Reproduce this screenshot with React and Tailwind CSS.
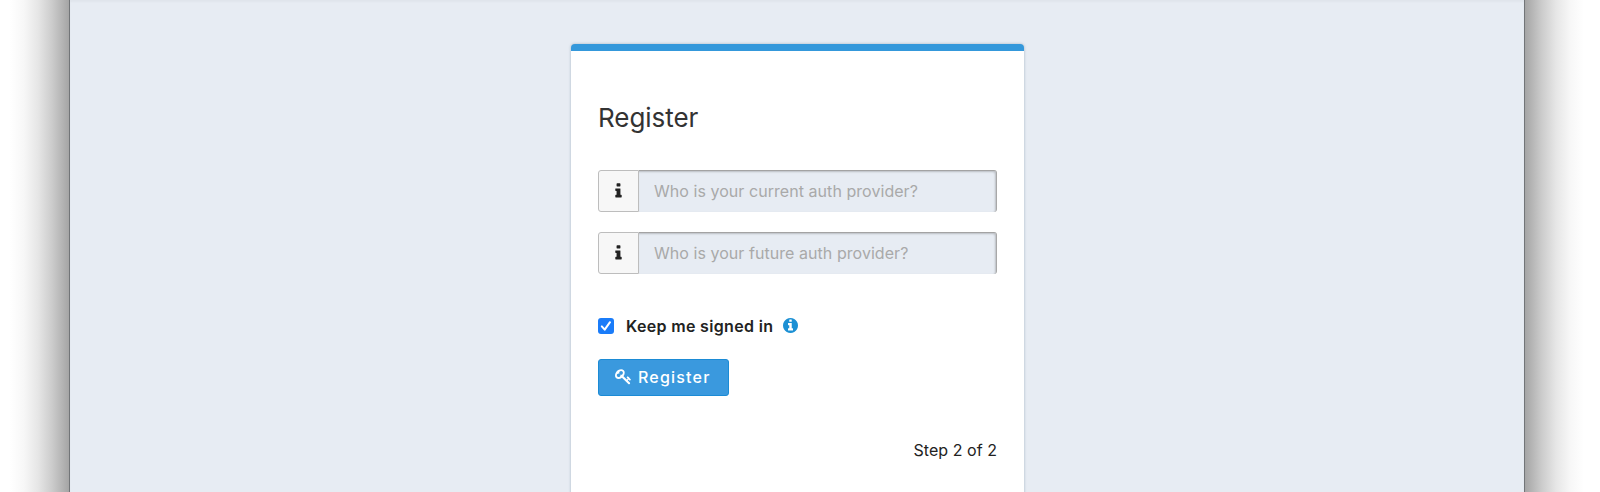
function InfoIcon({ className }) {
  return (
    <svg viewBox="0 0 640 1792" fill="currentColor" className={className}>
      <path d="M640 1344v128q0 26-19 45t-45 19h-512q-26 0-45-19t-19-45v-128q0-26 19-45t45-19h64v-384h-64q-26 0-45-19t-19-45v-128q0-26 19-45t45-19h384q26 0 45 19t19 45v576h64q26 0 45 19t19 45zm-128-1152v192q0 26-19 45t-45 19h-256q-26 0-45-19t-19-45v-192q0-26 19-45t45-19h256q26 0 45 19t19 45z" />
    </svg>
  );
}

function InfoCircleIcon({ className }) {
  return (
    <svg viewBox="0 128 1536 1536" fill="currentColor" className={className}>
      <path d="M1024 1376v-160q0-14-9-23t-23-9h-96v-512q0-14-9-23t-23-9h-320q-14 0-23 9t-9 23v160q0 14 9 23t23 9h96v320h-96q-14 0-23 9t-9 23v160q0 14 9 23t23 9h448q14 0 23-9t9-23zm-128-896v-160q0-14-9-23t-23-9h-192q-14 0-23 9t-9 23v160q0 14 9 23t23 9h192q14 0 23-9t9-23zm640 416q0 209-103 385.5t-279.5 279.5-385.5 103-385.5-103-279.5-279.5-103-385.5 103-385.5 279.5-279.5 385.5-103 385.5 103 279.5 279.5 103 385.5z" />
    </svg>
  );
}

function KeyIcon({ className }) {
  return (
    <svg viewBox="0 0 1792 1792" fill="currentColor" className={className}>
      <path d="M832 512q0-80-56-136t-136-56-136 56-56 136q0 42 19 83-41-19-83-19-80 0-136 56t-56 136 56 136 136 56 136-56 56-136q0-42-19-83 41 19 83 19 80 0 136-56t56-136zm851 704q0 17-49 66t-66 49q-9 0-28.5-16t-36.5-33-38.5-40-24.5-26l-96 96 220 220q28 28 28 68 0 42-39 81t-81 39q-40 0-68-28l-671-671q-176 131-365 131-163 0-265.5-102.5t-102.5-265.5q0-160 95-313t248-248 313-95q163 0 265.5 102.5t102.5 265.5q0 189-131 365l355 355 96-96q-3-3-26-24.5t-40-38.5-33-36.5-16-28.5q0-17 49-66t66-49q13 0 23 10 6 6 46 44.5t82 79.5 86.5 86 73 78 28.5 41z" />
    </svg>
  );
}

function Field({ placeholder }) {
  return (
    <div className="flex h-[42px] w-full">
      <span className="flex w-[41px] shrink-0 items-center justify-center rounded-l-[3px] border border-[#bdbdbd] bg-[#f7f7f7]">
        <InfoIcon className="h-[18px] w-[7px] text-[#222]" />
      </span>
      <input
        placeholder={placeholder}
        className="min-w-0 flex-1 rounded-r-[3px] border-t border-r border-t-[#a3a3a3] border-r-[#a8a8a8] bg-[#e7ecf3] pb-[2px] pl-[15px] text-[16px] tracking-[0.05px] shadow-[inset_-1px_1px_2px_rgba(0,0,0,0.2)] outline-none placeholder:text-[#a9a9a9]"
      />
    </div>
  );
}

export default function App() {
  return (
    <div className="flex h-[492px] w-full overflow-hidden bg-white font-['Inter',sans-serif] text-[#222]">
      <div className="w-[69px] shrink-0 bg-[linear-gradient(to_right,#fff_10px,#f7f7f7_24px,#e6e6e6_38px,#cccccc_52px,#a5a5a5_69px)]" />
      <main className="flex flex-1 items-start justify-center border-x border-[#727578] bg-[#e7ecf3] pt-[44px] shadow-[inset_0_2px_2px_rgba(0,0,0,0.03)]">
        <section className="ml-[1px] h-[460px] w-[453px] rounded-t-[4px] border-t-[7px] border-[#3498db] bg-white px-[27px] pt-[49px] shadow-[0_0_3px_rgba(70,100,130,0.4)]">
          <h1 className="h-[70px] text-[26px] leading-[36px] tracking-[-0.05px] text-[#333]">Register</h1>
          <div className="flex flex-col gap-[20px]">
            <Field placeholder="Who is your current auth provider?" />
            <Field placeholder="Who is your future auth provider?" />
          </div>
          <div className="mt-[43px] flex h-[18px] items-center">
            <span className="flex size-[16px] items-center justify-center rounded-[3px] bg-[#1a7cf9]">
              <svg viewBox="0 0 16 16" fill="none" stroke="white" strokeWidth="2" strokeLinecap="round" strokeLinejoin="round" className="size-4">
                <path d="M3.8 8.4 6.7 11.7 12 4.2" />
              </svg>
            </span>
            <span className="ml-[12px] pb-[1px] text-[16px] font-semibold tracking-[0.33px]">Keep me signed in</span>
            <InfoCircleIcon className="mb-[1px] ml-[10px] size-[15px] text-[#1c90d4]" />
          </div>
          <button className="mt-[24px] flex h-[37px] w-[131px] items-center rounded-[3px] border border-[#1b8bd5] bg-[#3a99de] pb-[2px] pl-[16px] text-[16px] font-medium tracking-[1.2px] text-white">
            <KeyIcon className="mr-[6px] size-[17px]" />
            Register
          </button>
          <p className="mt-[42px] text-right text-[16px] leading-[24px] tracking-[0.05px]">Step 2 of 2</p>
        </section>
      </main>
      <div className="w-[75px] shrink-0 bg-[linear-gradient(to_left,#fff_16px,#f7f7f7_30px,#e6e6e6_44px,#cccccc_58px,#a5a5a5_75px)]" />
    </div>
  );
}
